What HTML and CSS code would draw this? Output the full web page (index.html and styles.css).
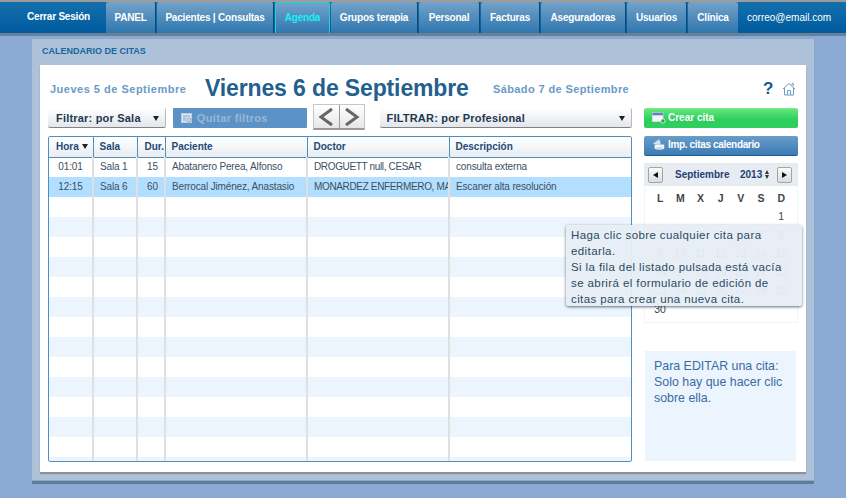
FILE: index.html

```html
<!DOCTYPE html>
<html lang="es">
<head>
  <meta charset="UTF-8" />
  <title>Calendario de citas</title>
  <link rel="stylesheet" href="styles.css">
</head>
<body>
  <nav class="topbar">
    <a class="logout">Cerrar Sesión</a>
    <div class="tabs">
      <a class="tab tab-panel">PANEL</a>
      <a class="tab tab-pacientes">Pacientes | Consultas</a>
      <a class="tab tab-agenda active">Agenda</a>
      <a class="tab tab-grupos">Grupos terapia</a>
      <a class="tab tab-personal">Personal</a>
      <a class="tab tab-facturas">Facturas</a>
      <a class="tab tab-aseg">Aseguradoras</a>
      <a class="tab tab-usuarios">Usuarios</a>
      <a class="tab tab-clinica">Clínica</a>
    </div>
    <span class="user-mail">correo@email.com</span>
  </nav>

  <main class="panel">
    <h2 class="panel-title">CALENDARIO DE CITAS</h2>
    <div class="sheet">
      <div class="date-row">
        <span class="date-side date-prev">Jueves 5 de Septiembre</span>
        <span class="date-main">Viernes 6 de Septiembre</span>
        <span class="date-side date-next">Sábado 7 de Septiembre</span>
        <span class="help">?</span>
        <svg class="home-icon" width="14" height="14" viewBox="0 0 14 14" fill="none" stroke="#6f9cc4" stroke-width="1">
          <path d="M1 7 7 1.5 13 7M2.5 6v7h9V6M5.5 13V8.5h3V13M10 3V1.5h1.2V4"/>
        </svg>
      </div>

      <div class="columns">
        <div class="col-left">
          <div class="filters">
            <div class="select select-sala">Filtrar: por Sala<i class="caret"></i></div>
            <button class="btn-clear">
              <svg width="12" height="11" viewBox="0 0 12 11"><rect x="0.5" y="0.5" width="10" height="9" fill="#dfe8f2" stroke="#b9cde2"/><path d="M2 3h7M2 5h3M2 7h3" stroke="#7fa3c8"/><circle cx="8" cy="7" r="2" fill="#cfdff0" stroke="#8fa9c4"/></svg>
              Quitar filtros
            </button>
            <div class="arrows">
              <span class="arrow"><svg width="16" height="20" viewBox="0 0 16 20" fill="none" stroke="#666" stroke-width="3"><path d="M14 2 3 10l11 8"/></svg></span>
              <span class="arrow"><svg width="16" height="20" viewBox="0 0 16 20" fill="none" stroke="#666" stroke-width="3"><path d="M2 2l11 8-11 8"/></svg></span>
            </div>
            <div class="select select-prof">FILTRAR: por Profesional<i class="caret"></i></div>
          </div>

          <div class="table-box">
            <table class="citas">
              <colgroup>
                <col class="c-hora"><col class="c-sala"><col class="c-dur"><col class="c-pac"><col class="c-doc"><col>
              </colgroup>
              <thead>
                <tr>
                  <th class="th-hora">Hora <i class="sort"></i></th>
                  <th>Sala</th>
                  <th class="th-dur">Dur.</th>
                  <th>Paciente</th>
                  <th>Doctor</th>
                  <th>Descripción</th>
                </tr>
              </thead>
              <tbody>
                <tr>
                  <td class="center">01:01</td><td>Sala 1</td><td class="center td-dur">15</td>
                  <td>Abatanero Perea, Alfonso</td><td class="td-doc">DROGUETT null, CESAR</td><td>consulta externa</td>
                </tr>
                <tr class="selected">
                  <td class="center">12:15</td><td>Sala 6</td><td class="center td-dur">60</td>
                  <td>Berrocal Jiménez, Anastasio</td><td class="td-doc">MONARDEZ ENFERMERO, MA</td><td>Escaner alta resolución</td>
                </tr>
                <tr><td></td><td></td><td></td><td></td><td></td><td></td></tr>
                <tr><td></td><td></td><td></td><td></td><td></td><td></td></tr>
                <tr><td></td><td></td><td></td><td></td><td></td><td></td></tr>
                <tr><td></td><td></td><td></td><td></td><td></td><td></td></tr>
                <tr><td></td><td></td><td></td><td></td><td></td><td></td></tr>
                <tr><td></td><td></td><td></td><td></td><td></td><td></td></tr>
                <tr><td></td><td></td><td></td><td></td><td></td><td></td></tr>
                <tr><td></td><td></td><td></td><td></td><td></td><td></td></tr>
                <tr><td></td><td></td><td></td><td></td><td></td><td></td></tr>
                <tr><td></td><td></td><td></td><td></td><td></td><td></td></tr>
                <tr><td></td><td></td><td></td><td></td><td></td><td></td></tr>
                <tr><td></td><td></td><td></td><td></td><td></td><td></td></tr>
                <tr><td></td><td></td><td></td><td></td><td></td><td></td></tr>
                <tr><td></td><td></td><td></td><td></td><td></td><td></td></tr>
              </tbody>
            </table>
          </div>
        </div>

        <aside class="col-right">
          <button class="action action-green">
            <svg width="14" height="13" viewBox="0 0 16 14"><rect x="0.500" y="1.500" width="12" height="10" fill="#f2f6fb" stroke="#d5e0ec"/><rect x="0.500" y="1.500" width="12" height="3" fill="#5a86b8"/><circle cx="12.500" cy="11" r="2.500" fill="#3f9a4e" stroke="#e8f5e8"/></svg>
            Crear cita
          </button>
          <button class="action action-blue">
            <svg width="14" height="13" viewBox="0 0 16 14"><path d="M1 6 8 1l2 4-1 2H5z" fill="#cfe2f5"/><rect x="3" y="7" width="11" height="5" rx="1" fill="#f1f5fa"/><rect x="5" y="10" width="7" height="3" fill="#c9d7e6"/></svg>
            Imp. citas calendario
          </button>

          <div class="calendar">
            <div class="cal-head">
              <span class="cal-nav"><i class="tri-left"></i></span>
              <span class="cal-month">Septiembre</span>
              <span class="cal-year">2013</span>
              <i class="spin"></i>
              <span class="cal-nav"><i class="tri-right"></i></span>
            </div>
            <div class="cal-grid cal-names">
              <span>L</span><span>M</span><span>X</span><span>J</span><span>V</span><span>S</span><span>D</span>
            </div>
            <div class="cal-grid cal-days">
              <span></span><span></span><span></span><span></span><span></span><span></span><span>1</span>
              <span>2</span><span>3</span><span>4</span><span>5</span><span class="today">6</span><span>7</span><span>8</span>
              <span>9</span><span>10</span><span>11</span><span>12</span><span>13</span><span>14</span><span>15</span>
              <span>16</span><span>17</span><span>18</span><span>19</span><span>20</span><span>21</span><span>22</span>
              <span>23</span><span>24</span><span>25</span><span>26</span><span>27</span><span>28</span><span>29</span>
              <span>30</span>
            </div>
          </div>

          <div class="info-box">Para EDITAR una cita:<br>Solo hay que hacer clic sobre ella.</div>
        </aside>
      </div>

      <div class="tooltip">Haga clic sobre cualquier cita para editarla.<br>Si la fila del listado pulsada está vacía se abrirá el formulario de edición de citas para crear una nueva cita.</div>
    </div>
  </main>
</body>
</html>
```

FILE: styles.css

```css
* {
  box-sizing: border-box;
}

html, body {
  height: 100%;
}

body {
  margin: 0;
  font-family: "Liberation Sans", Arial, sans-serif;
  background: #8aaad3;
  overflow: hidden;
}

/* barra superior */
.topbar {
  display: flex;
  height: 36px;
  padding-top: 2px;
  background: linear-gradient(#9c9c9c 0, #9c9c9c 2px, #1470ad 2px, #015c9f 31px);
  border-bottom: 3px solid #6b7f96;
  color: white;
  font-size: 10px;
}

.logout {
  width: 106px;
  padding: 9px 0 0 27px;
  font-weight: bold;
  letter-spacing: -0.2px;
}

.tabs {
  display: flex;
}

.tab {
  height: 31px;
  margin-right: 1px;
  padding-top: 10px;
  text-align: center;
  font-weight: bold;
  letter-spacing: -0.2px;
  background: linear-gradient(#73a2c9, #2f77ae);
  border-right: 1px solid #0d4a78;
  border-radius: 2px 2px 0 0;
}

.tab-panel { width: 50px; }
.tab-pacientes { width: 117px; }
.tab-agenda { width: 55px; }
.tab-grupos { width: 87px; }
.tab-personal { width: 61px; }
.tab-facturas { width: 59px; }
.tab-aseg { width: 85px; }
.tab-usuarios { width: 60px; }
.tab-clinica { width: 50px; margin-right: 0; border-right: none; }

.tab.active {
  color: #19f0f5;
  border: 1px solid #19d5e0;
  border-bottom: none;
  padding-top: 9px;
}

.user-mail {
  padding: 10px 0 0 9px;
}

/* panel principal */
.panel {
  width: 782px;
  height: 442px;
  margin: 3px 0 0 32px;
  padding: 0 8px;
  background: #adc2d8;
  border-bottom: 1px solid #8fa7c0;
  box-shadow: 0 3px 0 #5e7d9c;
}

.panel-title {
  margin: 0;
  height: 26px;
  padding: 7px 0 0 2px;
  font-size: 9px;
  color: #15659f;
}

.sheet {
  position: relative;
  height: 407px;
  padding: 8px;
  background: white;
  box-shadow: 0 2px 1px #8b929b;
}

.date-row {
  display: flex;
  align-items: center;
  height: 31px;
  padding-left: 2px;
  color: #6a9ac6;
  font-size: 11px;
  font-weight: bold;
  letter-spacing: 0.5px;
}

.date-prev { width: 155px; }

.date-main {
  width: 288px;
  font-size: 23px;
  letter-spacing: -0.13px;
  color: #24608f;
}

.date-next {
  width: 270px;
  letter-spacing: 0.38px;
}

.help {
  width: 19px;
  font-size: 17px;
  letter-spacing: 0;
  color: #17578e;
}

.home-icon {
  display: block;
}

.columns {
  display: flex;
  gap: 12px;
}

.col-left {
  width: 584px;
}

/* filtros */
.filters {
  display: flex;
  align-items: center;
  height: 28px;
  margin-bottom: 4px;
}

.select {
  position: relative;
  height: 20px;
  padding: 4px 0 0 8px;
  font-size: 11px;
  font-weight: bold;
  letter-spacing: 0.2px;
  color: #22384f;
  background: linear-gradient(#ffffff, #e3e6ea);
  border-bottom: 1px solid #7f8388;
  border-right: 1px solid #b5b8bc;
  border-radius: 2px;
}

.select-sala { width: 118px; }
.select-prof { width: 253px; margin-left: 15px; padding-left: 7px; }

.caret {
  position: absolute;
  right: 6px;
  top: 8px;
  border-left: 3.5px solid transparent;
  border-right: 3.5px solid transparent;
  border-top: 5px solid #222;
}

.btn-clear {
  display: flex;
  align-items: center;
  gap: 4px;
  width: 134px;
  height: 20px;
  margin-left: 7px;
  padding: 0 0 0 8px;
  border: none;
  border-radius: 1px;
  background: #5b93c6;
  color: #9ab7d4;
  font: bold 11px "Liberation Sans", Arial, sans-serif;
  letter-spacing: 0.35px;
}

.arrows {
  display: flex;
  margin: -2px 0 0 6px;
  height: 26px;
  border: 1px solid #c6c6c6;
  border-bottom: 2px solid #9a9a9a;
}

.arrow {
  display: flex;
  align-items: center;
  justify-content: center;
  width: 25px;
  background: linear-gradient(#ffffff, #e6e6e6);
}

.arrow + .arrow {
  border-left: 1px solid #9a9a9a;
}

/* tabla */
.table-box {
  height: 326px;
  overflow: hidden;
  border: 1px solid #4f8fbf;
  border-radius: 2px;
}

.citas {
  width: 100%;
  border-collapse: collapse;
  table-layout: fixed;
  font-size: 10px;
  color: #3c4f63;
}

.c-hora { width: 44px; }
.c-sala { width: 44px; }
.c-dur { width: 28px; }
.c-pac { width: 142px; }
.c-doc { width: 142px; }

.citas th {
  height: 20px;
  padding: 0 0 0 6px;
  text-align: left;
  font-size: 10px;
  color: #1f4a78;
  background: linear-gradient(#ffffff, #e9edf1);
  border-right: 1px solid #4f8fbf;
  border-bottom: 1px solid #4f8fbf;
}

.citas th:last-child,
.citas td:last-child {
  border-right: none;
}

.citas th.th-hora {
  padding-left: 7px;
}

.citas th.th-dur {
  padding-left: 7px;
}

.sort {
  display: inline-block;
  vertical-align: 1px;
  border-left: 3px solid transparent;
  border-right: 3px solid transparent;
  border-top: 5px solid #222;
}

.citas td {
  height: 20px;
  padding: 0 0 2px 6px;
  white-space: nowrap;
  overflow: hidden;
  letter-spacing: -0.15px;
  border-right: 2px solid #dfe0e2;
}

.citas td.td-doc {
  letter-spacing: -0.35px;
}

.citas td.center {
  padding: 0 0 2px;
  text-align: center;
}

.citas td.td-dur {
  padding-left: 3px;
}

.citas tbody tr:nth-child(even) {
  background: #ecf5fd;
}

.citas tbody tr.selected {
  background: #b2dfff;
}

/* columna derecha */
.col-right {
  width: 154px;
  margin-top: 4px;
}

.action {
  display: flex;
  align-items: center;
  gap: 2px;
  width: 100%;
  height: 20px;
  margin-bottom: 8px;
  padding: 0 0 2px 8px;
  border: none;
  border-radius: 2px;
  color: white;
  font: bold 10px "Liberation Sans", Arial, sans-serif;
}

.action-green {
  background: linear-gradient(#66e67f, #2dcf5e 55%, #2fce60);
  border-top: 1px solid #7cf07c;
}

.action-blue {
  letter-spacing: -0.35px;
  background: linear-gradient(#6a9cc8, #3a7cb4);
  border-bottom: 1px solid #1f5a8f;
}

.calendar {
  height: 160px;
  margin-top: -1px;
  border: 1px solid #f0f5fa;
}

.cal-head {
  display: flex;
  align-items: center;
  height: 23px;
  margin: -1px -1px 0;
  padding: 0 4px;
  background: #e7ecf3;
  color: #1f3f73;
  font-size: 10px;
  font-weight: bold;
}

.cal-nav {
  display: flex;
  align-items: center;
  justify-content: center;
  width: 15px;
  height: 16px;
  background: linear-gradient(#fafafa, #dcdcdc);
  border: 1px solid #a5a5a5;
  border-radius: 2px;
}

.tri-left, .tri-right {
  border-top: 3.500px solid transparent;
  border-bottom: 3.500px solid transparent;
}

.tri-left { border-right: 5px solid #111; }
.tri-right { border-left: 5px solid #111; }

.cal-month {
  width: 65px;
  margin-left: 12px;
}

.cal-year {
  width: 25px;
}

.spin {
  position: relative;
  width: 5px;
  height: 9px;
  margin-right: 7px;
}

.spin::before,
.spin::after {
  content: "";
  position: absolute;
  left: 0;
  border-left: 2.500px solid transparent;
  border-right: 2.500px solid transparent;
}

.spin::before {
  top: 0;
  border-bottom: 4px solid #333;
}

.spin::after {
  bottom: 0;
  border-top: 4px solid #333;
}

.cal-grid {
  display: grid;
  grid-template-columns: repeat(7, 20.2px);
  padding-left: 5px;
  text-align: center;
  font-size: 10.5px;
  color: #444;
}

.cal-names {
  padding-top: 6px;
  height: 21px;
  font-weight: bold;
}

.cal-days span {
  height: 18.500px;
  line-height: 18px;
}

.cal-days .today {
  background: #dfe6ee;
}

.info-box {
  height: 110px;
  margin: 28px 2px 0 1px;
  padding: 7px 9px;
  background: #ecf5fe;
  color: #3a6ba5;
  font-size: 12.400px;
  line-height: 16px;
}

.tooltip {
  position: absolute;
  left: 526px;
  top: 160px;
  width: 236px;
  height: 81px;
  padding: 2px 16px 0 5px;
  background: rgba(230, 237, 246, 0.96);
  border-radius: 3px;
  box-shadow: 0 1px 3px rgba(40, 50, 60, 0.7);
  color: #2c4a60;
  font-size: 11.500px;
  line-height: 16px;
  letter-spacing: 0.4px;
}
```
